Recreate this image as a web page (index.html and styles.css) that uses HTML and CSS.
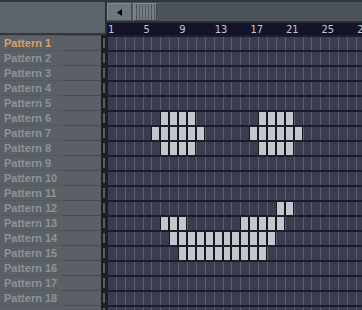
FILE: index.html
```html
<!DOCTYPE html>
<html lang="en">
<head>
    <meta charset="UTF-8">
    <meta name="viewport" content="width=device-width, initial-scale=1.0">
    <title>Playlist</title>
    <link rel="stylesheet" href="styles.css">
</head>
<body>
    <div class="playlist">
        <div class="header">
            <div class="corner"></div>
            <div class="top-right">
                <div class="scrollbar">
                    <div class="scroll-btn">
                        <svg width="5" height="7" viewBox="0 0 5 7"><polygon points="0,3.5 5,0 5,7" fill="#000"/></svg>
                    </div>
                    <div class="thumb"></div>
                    <div class="track"></div>
                </div>
                <div class="ruler">
                    <span>1</span><span>5</span><span>9</span><span>13</span>
                    <span>17</span><span>21</span><span>25</span><span>29</span>
                </div>
            </div>
        </div>
        <div class="rows" id="rows"></div>
    </div>

    <script>
        const STEPS = 29;
        const NAMED_ROWS = 18;
        // steps that are switched on, by row (0 = Pattern 1)
        const pattern = {
            5: [6, 7, 8, 9, 17, 18, 19, 20],
            6: [5, 6, 7, 8, 9, 10, 16, 17, 18, 19, 20, 21],
            7: [6, 7, 8, 9, 17, 18, 19, 20],
            11: [19, 20],
            12: [6, 7, 8, 15, 16, 17, 18, 19],
            13: [7, 8, 9, 10, 11, 12, 13, 14, 15, 16, 17, 18],
            14: [8, 9, 10, 11, 12, 13, 14, 15, 16, 17]
        };

        const rows = document.getElementById('rows');
        // one extra row peeks in at the bottom edge
        for (let r = 0; r <= NAMED_ROWS; r++) {
            const row = document.createElement('div');
            row.className = 'row';

            const label = document.createElement('div');
            label.className = r === 0 ? 'label active' : 'label';
            if (r < NAMED_ROWS) label.textContent = 'Pattern ' + (r + 1);
            row.appendChild(label);

            const led = document.createElement('div');
            led.className = 'led';
            row.appendChild(led);

            const steps = document.createElement('div');
            steps.className = 'steps';
            const on = pattern[r] || [];
            for (let s = 0; s < STEPS; s++) {
                const step = document.createElement('div');
                step.className = on.includes(s) ? 'step on' : 'step';
                steps.appendChild(step);
            }
            row.appendChild(steps);
            rows.appendChild(row);
        }
    </script>
</body>
</html>
```

FILE: styles.css
```css
body {
    margin: 0;
    padding: 0;
    background: #3b3c50;
    font-family: "Liberation Sans", Arial, sans-serif;
    overflow: hidden;
}
.playlist {
    width: 362px;
    height: 310px;
    overflow: hidden;
}
.header {
    display: flex;
    height: 35px;
    border-top: 2px solid #2f3539;
    box-sizing: border-box;
}
.corner {
    flex: none;
    width: 105px;
    background: #5c6469;
    border-right: 2px solid #2a2f33;
    border-bottom: 2px solid #32373b;
}
.top-right {
    flex: 1;
    min-width: 0;
    overflow: hidden;
    display: flex;
    flex-direction: column;
}
.scrollbar {
    display: flex;
    height: 19px;
    background: #4c5358;
    border-bottom: 2px solid #2a2f33;
}
.scroll-btn {
    flex: none;
    width: 23px;
    height: 16px;
    margin-top: 1px;
    background: #6f767b;
    border: 1px solid;
    border-color: #848b90 #4a5156 #4a5156 #848b90;
    display: flex;
    align-items: center;
    justify-content: center;
}
.thumb {
    flex: none;
    width: 22px;
    height: 16px;
    margin: 1px 0 0 1px;
    border: 1px solid;
    border-color: #848b90 #3f4549 #3f4549 #848b90;
    background: repeating-linear-gradient(90deg, #777e83 0, #777e83 2px, #4f565b 2px, #4f565b 3px);
}
.track {
    flex: 1;
}
.ruler {
    display: flex;
    height: 12px;
    background: #13142a;
    color: #c3c7d4;
    font-family: "Liberation Sans Narrow", "DejaVu Sans Condensed", sans-serif;
    font-size: 11px;
    line-height: 14px;
}
.ruler span {
    flex: none;
    width: 34.6px;
    padding-left: 1px;
}
.rows {
    display: flex;
    flex-direction: column;
}
.row {
    display: flex;
    flex: none;
    height: 15px;
}
.label {
    flex: none;
    width: 101px;
    height: 15px;
    box-sizing: border-box;
    padding: 2px 0 0 4px;
    /* row divider: faint under the name, darker toward the right */
    background:
        linear-gradient(#454b4f, #454b4f) no-repeat 63px 0 / 38px 1px,
        linear-gradient(#53595e, #53595e) no-repeat 0 0 / 63px 1px,
        #5a6065;
    color: #8c9398;
    font-size: 11px;
    font-weight: bold;
    line-height: 13px;
    white-space: nowrap;
}
.label.active {
    color: #d9a16b;
}
.led {
    flex: none;
    width: 6px;
    background: #1c201f;
    position: relative;
}
.led::after {
    content: "";
    position: absolute;
    left: 2px;
    top: 3px;
    width: 2px;
    height: 10px;
    background: #56605b;
}
.steps {
    flex: 1;
    min-width: 0;
    overflow: hidden;
    display: grid;
    grid-template-columns: repeat(29, 8.9px);
    border-top: 2px solid #1c1d28;
}
.step {
    border-left: 1px solid #5c5e71;
    background: #3b3c50;
}
.step:first-child {
    border-left-color: #1c201f;
}
.step.on {
    border-left-color: #17181f;
    border-right: 1px solid #17181f;
    background: #c3c6ca;
}
```
